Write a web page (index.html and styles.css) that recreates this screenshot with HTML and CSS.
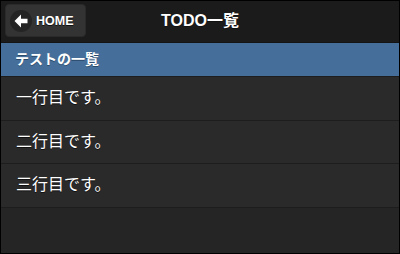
FILE: index.html
```html
<!DOCTYPE html>
<html lang="ja">
<head>
<meta charset="utf-8">
<title>TODO一覧</title>
<link rel="stylesheet" href="styles.css">
</head>
<body>
<div class="page">
  <header class="header">
    <a class="btn-home" href="#">
      <span class="icon">
        <svg width="14" height="14" viewBox="0 0 14 14"><path d="M7,0.5 L0.5,7 L7,13.5 L7,9.2 L13.5,9.2 L13.5,4.8 L7,4.8 Z" fill="#fff"/></svg>
      </span>
      <span class="btn-label">HOME</span>
    </a>
    <h1 class="title">TODO一覧</h1>
  </header>
  <ul class="list">
    <li class="divider">テストの一覧</li>
    <li class="item">一行目です。</li>
    <li class="item">二行目です。</li>
    <li class="item">三行目です。</li>
  </ul>
</div>
</body>
</html>
```
FILE: styles.css
```css
html, body {
  margin: 0;
  padding: 0;
  background: #252525;
}
body {
  font-family: "Liberation Sans", "Noto Sans CJK JP", sans-serif;
  color: #fff;
}
.page {
  box-sizing: border-box;
  width: 400px;
  height: 254px;
  border: 1px solid #000;
  background: #252525;
  display: flex;
  flex-direction: column;
}
.header {
  box-sizing: border-box;
  height: 42px;
  background: #1b1b1b;
  border-bottom: 1px solid #141414;
  display: grid;
  grid-template-columns: 1fr auto 1fr;
  align-items: start;
}
.btn-home {
  justify-self: start;
  box-sizing: border-box;
  margin: 3px 0 0 4px;
  height: 33px;
  width: 81px;
  background: #333;
  border: 1px solid #2a2a2a;
  border-radius: 4px;
  display: flex;
  align-items: center;
  padding-left: 4px;
  gap: 4px;
  text-decoration: none;
  color: #fff;
}
.icon {
  width: 22px;
  height: 22px;
  border-radius: 50%;
  background: #242424;
  display: flex;
  align-items: center;
  justify-content: center;
}
.icon svg { display: block; }
.btn-label {
  font-weight: bold;
  font-size: 12.5px;
  text-shadow: 0 1px 0 #111;
}
.title {
  margin: 0;
  font-size: 16px;
  font-weight: bold;
  line-height: 40px;
  text-shadow: 0 1px 0 #111;
}
.list {
  list-style: none;
  margin: 0;
  padding: 0;
}
.divider {
  box-sizing: border-box;
  height: 34px;
  background: #456f9a;
  border-bottom: 1px solid #1d1d1d;
  padding-left: 14px;
  font-size: 14px;
  font-weight: bold;
  line-height: 33px;
  text-shadow: 0 1px 0 #2a4a6a;
}
.item {
  box-sizing: border-box;
  height: 44px;
  background: #2a2a2a;
  border-bottom: 1px solid #1d1d1d;
  padding-left: 15px;
  font-size: 16px;
  line-height: 42px;
  text-shadow: 0 1px 0 #111;
}
.item:nth-child(3) {
  height: 43px;
  line-height: 41px;
}
```
